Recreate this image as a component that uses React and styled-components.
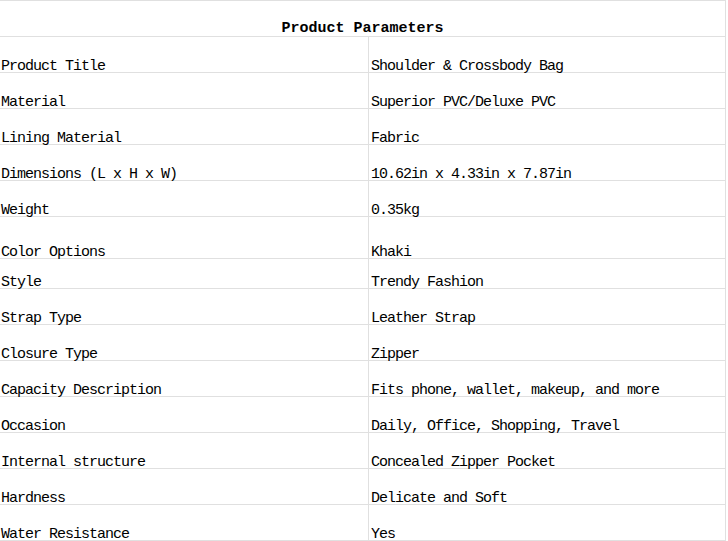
import React from "react";
import styled, { createGlobalStyle } from "styled-components";

const Global = createGlobalStyle`
  html, body { margin: 0; padding: 0; background: #ffffff; }
  body { font-family: "Liberation Mono", "DejaVu Sans Mono", monospace; color: #000; }
`;

const Table = styled.div`
  width: 726px;
  display: grid;
  grid-template-columns: 369px 357px;
  border-top: 1px solid #e0e0e0;
`;

const HeaderCell = styled.div`
  grid-column: 1 / span 2;
  box-sizing: border-box;
  height: 36px;
  border-bottom: 1px solid #e0e0e0;
  border-right: 1px solid #e0e0e0;
  display: flex;
  align-items: flex-end;
  justify-content: center;
  font-weight: bold;
  font-size: 15px;
  letter-spacing: 0px;
  line-height: 14px;
`;

const Cell = styled.div`
  box-sizing: border-box;
  height: ${(p) => p.$h}px;
  border-bottom: 1px solid #e0e0e0;
  border-right: 1px solid #e0e0e0;
  display: flex;
  align-items: flex-end;
  padding-left: ${(p) => (p.$right ? 2 : 1)}px;
  font-size: 15px;
  letter-spacing: -1px;
  line-height: 11px;
  white-space: pre;
`;

const rows = [
  ["Product Title", "Shoulder & Crossbody Bag", 36],
  ["Material", "Superior PVC/Deluxe PVC", 36],
  ["Lining Material", "Fabric", 36],
  ["Dimensions (L x H x W)", "10.62in x 4.33in x 7.87in", 36],
  ["Weight", "0.35kg", 36],
  ["Color Options", "Khaki", 42],
  ["Style", "Trendy Fashion", 30],
  ["Strap Type", "Leather Strap", 36],
  ["Closure Type", "Zipper", 36],
  ["Capacity Description", "Fits phone, wallet, makeup, and more", 36],
  ["Occasion", "Daily, Office, Shopping, Travel", 36],
  ["Internal structure", "Concealed Zipper Pocket", 36],
  ["Hardness", "Delicate and Soft", 36],
  ["Water Resistance", "Yes", 36],
];

export default function App() {
  return (
    <>
      <Global />
      <Table>
        <HeaderCell>Product Parameters</HeaderCell>
        {rows.map(([k, v, h]) => (
          <React.Fragment key={k}>
            <Cell $h={h}>{k}</Cell>
            <Cell $h={h} $right>{v}</Cell>
          </React.Fragment>
        ))}
      </Table>
    </>
  );
}
